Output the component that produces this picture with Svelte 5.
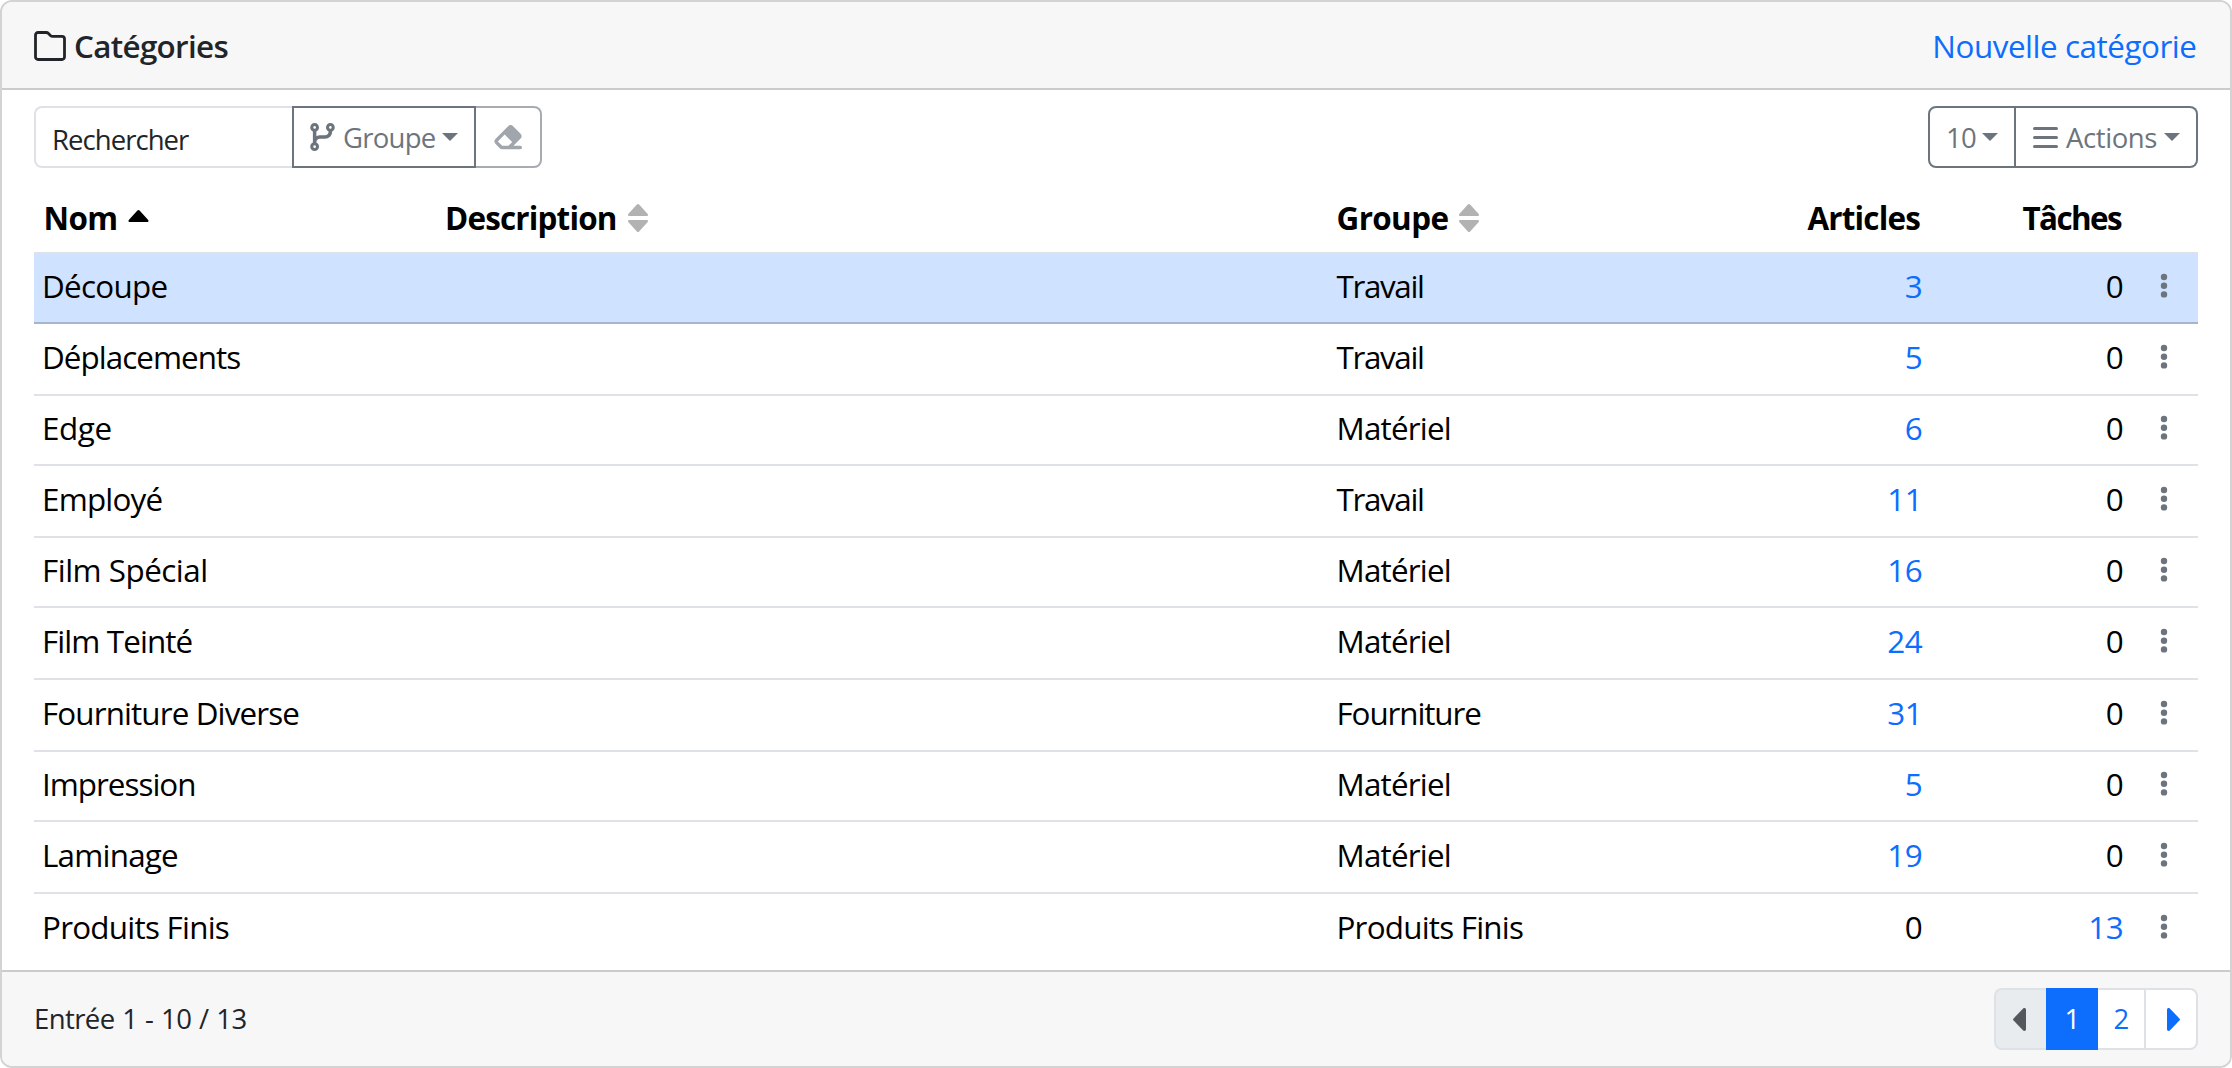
<script>
  // `fit` and `groupFit` are the tracking of each label, in px
  const rows = [
    { nom: 'Découpe', fit: -0.7, groupe: 'Travail', groupFit: -1.35, articles: 3, taches: 0 },
    { nom: 'Déplacements', fit: -0.95, groupe: 'Travail', groupFit: -1.35, articles: 5, taches: 0 },
    { nom: 'Edge', fit: -0.4, groupe: 'Matériel', groupFit: -0.8, articles: 6, taches: 0 },
    { nom: 'Employé', fit: -0.8, groupe: 'Travail', groupFit: -1.35, articles: 11, taches: 0 },
    { nom: 'Film Spécial', fit: -0.5, groupe: 'Matériel', groupFit: -0.8, articles: 16, taches: 0 },
    { nom: 'Film Teinté', fit: -0.9, groupe: 'Matériel', groupFit: -0.8, articles: 24, taches: 0 },
    { nom: 'Fourniture Diverse', fit: -0.88, groupe: 'Fourniture', groupFit: -1.1, articles: 31, taches: 0 },
    { nom: 'Impression', fit: -1, groupe: 'Matériel', groupFit: -0.8, articles: 5, taches: 0 },
    { nom: 'Laminage', fit: -0.78, groupe: 'Matériel', groupFit: -0.8, articles: 19, taches: 0 },
    { nom: 'Produits Finis', fit: -0.75, groupe: 'Produits Finis', groupFit: -0.78, articles: 0, taches: 13 }
  ];
</script>

{#snippet caret()}
  <svg class="caret" viewBox="0 0 16 8"><path d="M0 0h16L8 8z" /></svg>
{/snippet}

{#snippet sorter()}
  <svg class="sorter" viewBox="0 0 20 28">
    <path d="M1.2 12C0 12-.4 10.700.5 9.800L8.900.6a1.500 1.500 0 0 1 2.200 0l8.400 9.200c.9.900.5 2.200-.7 2.200zM1.200 16C0 16-.4 17.300.5 18.200l8.400 9.200a1.500 1.500 0 0 0 2.200 0l8.400-9.200c.9-.900.5-2.200-.7-2.200z" />
  </svg>
{/snippet}

{#snippet count(value)}
  {#if value > 0}<a class="num" href="#list">{value}</a>{:else}<span class="num">{value}</span>{/if}
{/snippet}

<div class="card">
  <header>
    <h1>
      <svg class="folder" viewBox="0 0 32 30">
        <path d="M5 1.500h7.200c.9 0 1.700.4 2.300 1l1.900 1.900c.6.600 1.400 1 2.300 1H28A2.500 2.500 0 0 1 30.500 7.900V26A2.500 2.500 0 0 1 28 28.500H4A2.500 2.500 0 0 1 1.500 26V4A2.500 2.500 0 0 1 4 1.500z" />
      </svg>
      <span>Catégories</span>
    </h1>
    <a class="new" href="#new">Nouvelle catégorie</a>
  </header>

  <main>
    <div class="toolbar">
      <div class="group">
        <div class="search"><span>Rechercher</span></div>
        <button class="btn by-group">
          <svg class="branch" viewBox="0 0 448 512">
            <path d="M80 104a24 24 0 1 0 0-48 24 24 0 1 0 0 48zm80-24c0 32.800-19.700 61-48 73.300v87.800c18.800-10.900 40.700-17.100 64-17.100h96c35.300 0 64-28.700 64-64v-6.700C307.700 141 288 112.800 288 80c0-44.200 35.800-80 80-80s80 35.800 80 80c0 32.800-19.700 61-48 73.300V160c0 70.700-57.300 128-128 128H176c-35.300 0-64 28.700-64 64v6.700c28.300 12.300 48 40.500 48 73.300 0 44.200-35.800 80-80 80S0 476.200 0 432c0-32.800 19.700-61 48-73.300V352 153.300C19.700 141 0 112.800 0 80 0 35.800 35.800 0 80 0s80 35.800 80 80zm232 0a24 24 0 1 0-48 0 24 24 0 1 0 48 0zM80 456a24 24 0 1 0 0-48 24 24 0 1 0 0 48z" />
          </svg>
          <span>Groupe</span>
          {@render caret()}
        </button>
        <button class="btn clear" aria-label="Effacer">
          <svg class="eraser" viewBox="0 0 576 512">
            <path d="M290.700 57.400 57.400 290.700c-25 25-25 65.500 0 90.500l80 80c12 12 28.300 18.700 45.300 18.700H512c17.700 0 32-14.300 32-32s-14.300-32-32-32H387.900L518.600 285.300c25-25 25-65.500 0-90.500L381.300 57.400c-25-25-65.500-25-90.500 0zM297.400 416H182.600l-80-80L227.300 211.300 364.700 348.700z" />
          </svg>
        </button>
      </div>
      <div class="group">
        <button class="btn size"><span>10</span>{@render caret()}</button>
        <button class="btn actions">
          <svg class="bars" viewBox="0 0 25 21"><path d="M1.500 1.500h22M1.500 10.500h22M1.500 19.500h22" /></svg>
          <span>Actions</span>
          {@render caret()}
        </button>
      </div>
    </div>

    <div class="table">
      <div class="row head">
        <div class="th-nom"><span>Nom</span><svg class="up" viewBox="0 0 20 12"><path d="M1.200 12C0 12-.4 10.700.5 9.800L8.900.6a1.500 1.500 0 0 1 2.200 0l8.400 9.200c.9.900.5 2.200-.7 2.200z" /></svg></div>
        <div class="th-desc"><span>Description</span>{@render sorter()}</div>
        <div class="th-group"><span>Groupe</span>{@render sorter()}</div>
        <div class="end th-art"><span>Articles</span></div>
        <div class="end th-task"><span>Tâches</span></div>
        <div></div>
      </div>
      {#each rows as row, i}
        <div class="row line" class:selected={i === 0}>
          <div style:letter-spacing="{row.fit}px">{row.nom}</div>
          <div></div>
          <div class="kind" style:letter-spacing="{row.groupFit}px">{row.groupe}</div>
          <div class="end">{@render count(row.articles)}</div>
          <div class="end">{@render count(row.taches)}</div>
          <div class="menu">
            <svg class="dots" viewBox="0 0 6 24"><circle cx="3" cy="3" r="3.200" /><circle cx="3" cy="11.700" r="3.200" /><circle cx="3" cy="20.400" r="3.200" /></svg>
          </div>
        </div>
      {/each}
    </div>
  </main>

  <footer>
    <span class="info">Entrée 1 - 10 / 13</span>
    <nav>
      <span class="page prev"><svg class="arrow" viewBox="0 0 13 23"><path d="M13 1.800v19.400c0 1.600-1.800 2.200-2.800 1.200L.6 12.600a1.500 1.500 0 0 1 0-2.200L10.200.6C11.200-.4 13 .2 13 1.800z" /></svg></span>
      <span class="page active">1</span>
      <span class="page two">2</span>
      <span class="page next"><svg class="arrow" viewBox="0 0 13 23"><path d="M0 1.800v19.400c0 1.600 1.800 2.200 2.800 1.200l9.600-9.800a1.500 1.500 0 0 0 0-2.200L2.800.6C1.800-.4 0 .2 0 1.800z" /></svg></span>
    </nav>
  </footer>
</div>

<style>
  :global(body) { background: #fff; }
  * { box-sizing: border-box; }
  .card {
    display: flex;
    flex-direction: column;
    height: 1068px;
    border: 2px solid #d3d3d3;
    border-radius: 12px;
    overflow: hidden;
    background: #fff;
    color: #212529;
    font: 400 31.400px/44px 'Open Sans', 'Noto Sans', sans-serif;
    letter-spacing: -0.6px;
  }
  svg { display: block; flex: none; fill: currentColor; }
  a { color: #0d6efd; text-decoration: none; }
  header {
    display: flex;
    justify-content: space-between;
    align-items: center;
    height: 88px;
    padding: 2px 32px 0;
    background: #f7f7f7;
    border-bottom: 2px solid #cbcbcb;
  }
  h1 { display: flex; align-items: center; gap: 8px; margin: 0; font-size: inherit; font-weight: 600; letter-spacing: -0.68px; }
  .new { letter-spacing: -0.45px; padding-right: 1.500px; }
  .folder { width: 32px; height: 30px; fill: none; stroke: currentColor; stroke-width: 2.800; }
  main { flex: 1; padding: 16px 32px 0; }
  .toolbar { display: flex; justify-content: space-between; }
  .group { display: flex; height: 62px; font-size: 27.500px; line-height: 40px; }
  .search { width: 258px; padding: 12px 16px 0; border: 2px solid #dee2e6; border-right: 0; border-radius: 8px 0 0 8px; letter-spacing: -0.95px; }
  .btn {
    display: flex;
    align-items: center;
    padding: 2px 16px 0;
    border: 2px solid #6c757d;
    background: #fff;
    color: #6c757d;
    font: inherit;
    letter-spacing: inherit;
  }
  .by-group { width: 184px; letter-spacing: -0.75px; }
  .clear { width: 66px; padding-top: 0; border-color: #a6acb1; border-left: 0; border-radius: 0 8px 8px 0; color: #a0a6ac; }
  .size { width: 88px; border-radius: 8px 0 0 8px; }
  .actions { width: 182px; padding-left: 17px; border-left: 0; border-radius: 0 8px 8px 0; letter-spacing: -0.4px; }
  .caret { width: 16px; height: 8px; margin-left: auto; margin-bottom: 2px; }
  .branch { width: 25px; height: 28px; margin-right: 8px; margin-bottom: 2px; }
  .eraser { width: 32px; height: 28px; }
  .bars { width: 25px; height: 21px; margin-right: 8px; margin-bottom: 2px; fill: none; stroke: currentColor; stroke-width: 3; stroke-linecap: round; }
  .table { color: #000; }
  .row {
    display: grid;
    grid-template-columns: 403px 890px 400px 194px 201px 76px;
    align-items: center;
    height: 70px;
    padding-bottom: 4px;
    border-bottom: 2px solid #dee2e6;
  }
  .row > div { display: flex; align-items: center; padding: 0 8px; }
  .row > .end { justify-content: flex-end; padding: 0; }
  .row > .kind { padding-left: 9.500px; }
  .row > .th-nom, .row > .th-group { padding-left: 9.500px; }
  .row > .th-desc { letter-spacing: -0.8px; }
  .row > .th-art { padding-right: 1px; letter-spacing: -0.8px; }
  .row > .th-task { padding-right: 1px; letter-spacing: -1.600px; }
  .num { margin-right: -1px; }
  .head { height: 86px; font-weight: 700; padding: 16px 0 0; }
  .line:nth-child(3), .line:nth-child(5), .line:nth-child(7), .line:nth-child(8), .line:nth-child(10) { height: 72px; }
  .line:last-child { height: 76px; border-bottom: 0; padding-bottom: 10px; }
  .selected { background: #cfe2ff; border-bottom-color: #a6b5cc; }
  .up { width: 21px; height: 12px; margin-left: 11px; margin-bottom: 4px; }
  .sorter { width: 20px; height: 28px; margin-left: 11px; margin-bottom: 1px; color: #b2b2b2; }
  .row > .menu { justify-content: center; padding: 0 0 0 8.500px; }
  .dots { width: 6px; height: 24px; color: #6c757d; overflow: visible; }
  footer {
    display: flex;
    justify-content: space-between;
    align-items: center;
    height: 96px;
    padding: 0 32px;
    background: #f7f7f7;
    border-top: 2px solid #cbcbcb;
    font-size: 27.500px;
  }
  .info { word-spacing: 1.200px; }
  nav { display: flex; height: 62px; }
  .page { display: flex; align-items: center; justify-content: center; border: 2px solid #dee2e6; background: #fff; color: #0d6efd; }
  .prev { width: 52px; padding-right: 3px; border-right: 0; border-radius: 8px 0 0 8px; background: #e9ecef; color: #54585c; }
  .active { width: 52px; border-color: #0d6efd; background: #0d6efd; color: #fff; }
  .two { width: 48px; border-left: 0; }
  .next { width: 52px; padding-left: 4px; border-left: 0; border-radius: 0 8px 8px 0; }
  .arrow { width: 13px; height: 23px; }
</style>
